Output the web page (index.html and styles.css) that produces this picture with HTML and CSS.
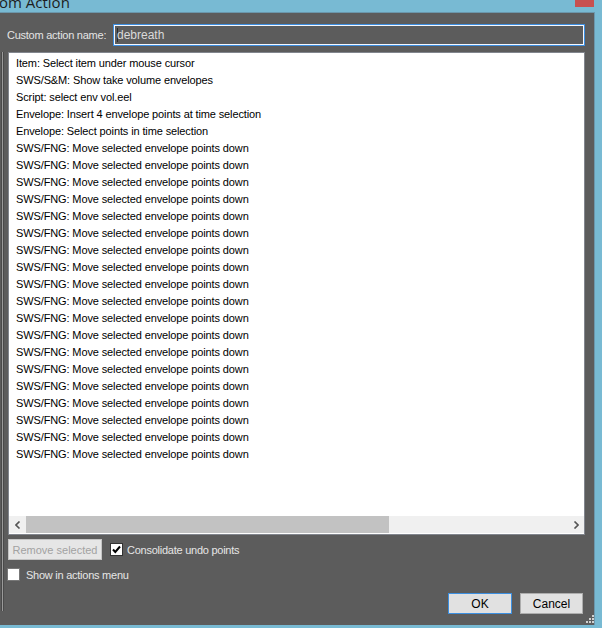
FILE: index.html
```html
<!DOCTYPE html>
<html>
<head>
<meta charset="utf-8">
<title>Custom Action</title>
<link rel="stylesheet" href="styles.css">
</head>
<body>
<div class="window">
  <div class="titlebar">
    <span class="title">om Action</span>
    <span class="close"></span>
  </div>
  <div class="panel">
    <div class="name-row">
      <label class="label">Custom action name:</label>
      <div class="textbox"><span class="caret"></span>debreath</div>
    </div>
    <div class="main">
      <div class="edge"></div>
      <div class="content">
        <div class="listbox">
          <div class="items">
            <div class="item">Item: Select item under mouse cursor</div>
            <div class="item">SWS/S&amp;M: Show take volume envelopes</div>
            <div class="item">Script: select env vol.eel</div>
            <div class="item">Envelope: Insert 4 envelope points at time selection</div>
            <div class="item">Envelope: Select points in time selection</div>
            <div class="item">SWS/FNG: Move selected envelope points down</div>
            <div class="item">SWS/FNG: Move selected envelope points down</div>
            <div class="item">SWS/FNG: Move selected envelope points down</div>
            <div class="item">SWS/FNG: Move selected envelope points down</div>
            <div class="item">SWS/FNG: Move selected envelope points down</div>
            <div class="item">SWS/FNG: Move selected envelope points down</div>
            <div class="item">SWS/FNG: Move selected envelope points down</div>
            <div class="item">SWS/FNG: Move selected envelope points down</div>
            <div class="item">SWS/FNG: Move selected envelope points down</div>
            <div class="item">SWS/FNG: Move selected envelope points down</div>
            <div class="item">SWS/FNG: Move selected envelope points down</div>
            <div class="item">SWS/FNG: Move selected envelope points down</div>
            <div class="item">SWS/FNG: Move selected envelope points down</div>
            <div class="item">SWS/FNG: Move selected envelope points down</div>
            <div class="item">SWS/FNG: Move selected envelope points down</div>
            <div class="item">SWS/FNG: Move selected envelope points down</div>
            <div class="item">SWS/FNG: Move selected envelope points down</div>
            <div class="item">SWS/FNG: Move selected envelope points down</div>
            <div class="item">SWS/FNG: Move selected envelope points down</div>
          </div>
          <div class="hscroll">
            <div class="arrow">
              <svg width="6" height="8" viewBox="0 0 6 8"><polyline points="4.5,0.5 1,4 4.5,7.5" fill="none" stroke="#555" stroke-width="1.6"/></svg>
            </div>
            <div class="track"><div class="thumb"></div></div>
            <div class="arrow">
              <svg width="6" height="8" viewBox="0 0 6 8"><polyline points="1.5,0.5 5,4 1.5,7.5" fill="none" stroke="#555" stroke-width="1.6"/></svg>
            </div>
          </div>
        </div>
        <div class="row-actions">
          <button class="btn btn-remove" disabled>Remove selected</button>
          <label class="check">
            <span class="box">
              <svg width="11" height="11" viewBox="0 0 11 11"><polyline points="2,5.5 4.3,8 9,2.5" fill="none" stroke="#000" stroke-width="2"/></svg>
            </span>
            Consolidate undo points
          </label>
        </div>
        <div class="row-menu">
          <label class="check">
            <span class="box"></span>
            Show in actions menu
          </label>
        </div>
        <div class="row-dialog">
          <button class="btn btn-ok">OK</button>
          <button class="btn btn-cancel">Cancel</button>
        </div>
      </div>
    </div>
    <div class="grip">
      <svg width="9" height="9" viewBox="0 0 9 9" fill="#d0d0d0">
        <rect x="7" y="1" width="2" height="2"/>
        <rect x="4" y="4" width="2" height="2"/>
        <rect x="7" y="4" width="2" height="2"/>
        <rect x="1" y="7" width="2" height="2"/>
        <rect x="4" y="7" width="2" height="2"/>
        <rect x="7" y="7" width="2" height="2"/>
      </svg>
    </div>
  </div>
</div>
</body>
</html>
```
FILE: styles.css
```css
html, body {
  margin: 0;
  padding: 0;
}

body {
  background: #78bad3;
  font-family: "Liberation Sans", Arial, sans-serif;
  font-size: 11px;
}

.window {
  width: 602px;
  height: 628px;
  overflow: hidden;
}

/* caption strip with the window title and close button */
.titlebar {
  box-sizing: border-box;
  width: 602px;
  height: 12px;
  padding-right: 8px;
  display: flex;
  justify-content: space-between;
  align-items: flex-start;
  overflow: hidden;
}

.title {
  font-family: "Open Sans", "Liberation Sans", sans-serif;
  font-size: 15px;
  line-height: 15px;
  color: #1e1e1e;
  margin-top: -5px;
  margin-left: -1px;
  white-space: nowrap;
}

.close {
  flex: none;
  width: 19px;
  height: 7px;
  background: #c75050;
}

.panel {
  position: relative;
  width: 594px;
  height: 612px;
  background: #5c5c5c;
  border-top: 1px solid #6b97ac;
  border-right: 1px solid #6b97ac;
}

.name-row {
  display: flex;
  align-items: center;
  padding-top: 11px;
  padding-left: 7px;
}

.label {
  color: #e4e4e4;
  width: 106px;
  letter-spacing: -0.25px;
}

.textbox {
  box-sizing: border-box;
  width: 472px;
  height: 22px;
  border: 1px solid #3d8ee0;
  box-shadow: inset 0 0 0 1px #f4f8ff;
  color: #dadada;
  font-size: 12px;
  display: flex;
  align-items: center;
  padding-left: 3px;
}

.caret {
  width: 1px;
  height: 14px;
  background: #2a2a2a;
  margin-right: -1px;
}

.main {
  display: flex;
  margin-top: 6px;
}

.edge {
  width: 1px;
  height: 559px;
  margin-left: 1px;
  background: #9a9a9a;
  border-left: 1px solid #4a4a4a;
  border-right: 1px solid #4a4a4a;
}

.content {
  margin-left: 4px;
  width: 577px;
}

.listbox {
  box-sizing: border-box;
  width: 577px;
  height: 483px;
  background: #fff;
  border: 1px solid #82868e;
  display: flex;
  flex-direction: column;
}

.items {
  flex: 1;
  padding-top: 2px;
  padding-left: 7px;
  overflow: hidden;
}

.item {
  height: 17px;
  line-height: 17px;
  color: #000;
  letter-spacing: -0.12px;
  white-space: nowrap;
}

.hscroll {
  height: 17px;
  display: flex;
  background: #f0f0f0;
  margin-bottom: 1px;
}

.arrow {
  width: 17px;
  display: flex;
  align-items: center;
  justify-content: center;
}

.track {
  flex: 1;
}

.thumb {
  width: 363px;
  height: 17px;
  background: #c2c2c2;
}

.row-actions {
  display: flex;
  align-items: center;
  margin-top: 4px;
  height: 21px;
}

.btn {
  box-sizing: border-box;
  height: 21px;
  font-family: "Liberation Sans", Arial, sans-serif;
  font-size: 12px;
  padding: 0;
  background: #e1e1e1;
  border: 1px solid #adadad;
  color: #000;
}

.btn-remove {
  width: 94px;
  font-size: 11px;
  color: #a2a2a2;
  background: #e6e6e6;
  border-color: #c4c4c4;
}

.check {
  display: flex;
  align-items: center;
  color: #e6e6e6;
  font-size: 11px;
  letter-spacing: -0.25px;
}

.row-actions .check {
  margin-left: 8px;
}

.box {
  box-sizing: border-box;
  width: 13px;
  height: 13px;
  background: #fff;
  border: 1px solid #333;
  margin-right: 4px;
  display: flex;
  align-items: center;
  justify-content: center;
}

.row-menu {
  margin-top: 8px;
  height: 13px;
  margin-left: -1px;
}

.row-menu .box {
  border-color: #777;
  margin-right: 6px;
}

.row-dialog {
  display: flex;
  justify-content: flex-end;
  gap: 8px;
  margin-top: 12px;
  padding-right: 2px;
}

.btn-ok {
  width: 64px;
  border-color: #3c8fe0;
}

.btn-cancel {
  width: 63px;
}

.grip {
  position: absolute;
  right: 0;
  bottom: 2px;
  width: 9px;
  height: 9px;
  line-height: 0;
}
```
